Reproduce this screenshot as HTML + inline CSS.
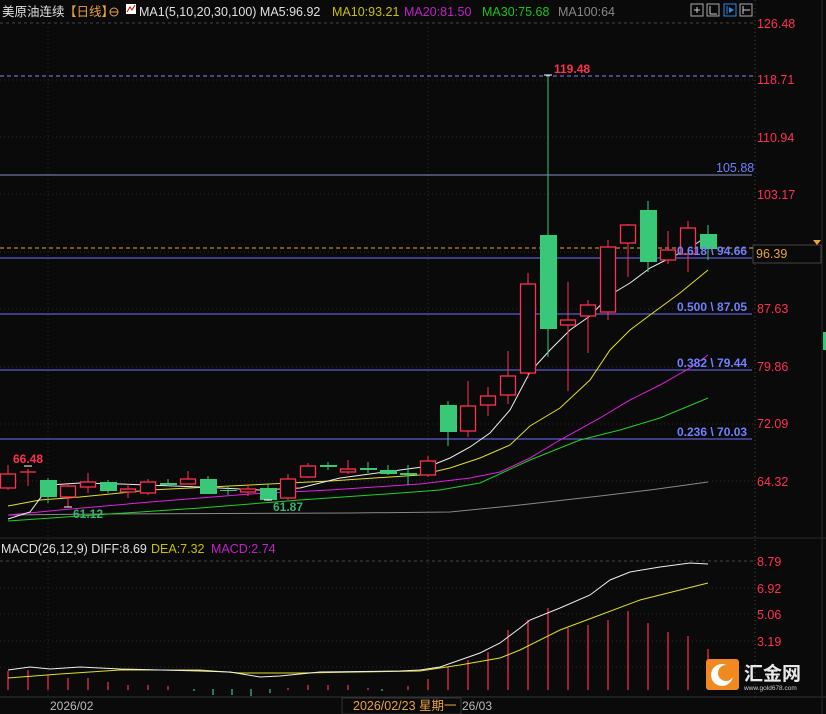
<!DOCTYPE html><html><head><meta charset="utf-8"><style>
html,body{margin:0;padding:0;background:#0a0a0a;}
svg{display:block}
text{font-family:"Liberation Sans","Noto Sans CJK SC",sans-serif;}
</style></head><body>
<svg width="826" height="714" viewBox="0 0 826 714" xmlns="http://www.w3.org/2000/svg">
<rect width="826" height="714" fill="#0a0a0a"/>
<g stroke="#2a2a2a" stroke-dasharray="1,3" stroke-width="1">
<line x1="0" y1="23" x2="755" y2="23" stroke="#444" stroke-dasharray="3,3"/>
<line x1="0" y1="80" x2="755" y2="80"/><line x1="0" y1="137" x2="755" y2="137"/>
<line x1="0" y1="194" x2="755" y2="194"/><line x1="0" y1="252" x2="755" y2="252"/>
<line x1="0" y1="309" x2="755" y2="309"/><line x1="0" y1="367" x2="755" y2="367"/>
<line x1="0" y1="424" x2="755" y2="424"/><line x1="0" y1="481" x2="755" y2="481"/>
<line x1="48" y1="23" x2="48" y2="697"/><line x1="428" y1="23" x2="428" y2="697"/>
<line x1="0" y1="561" x2="755" y2="561" stroke="#444" stroke-dasharray="3,3"/>
<line x1="0" y1="588" x2="755" y2="588"/><line x1="0" y1="614" x2="755" y2="614"/>
<line x1="0" y1="641" x2="755" y2="641"/><line x1="0" y1="667" x2="755" y2="667"/>
<line x1="755" y1="0" x2="755" y2="697" stroke="#444"/>
</g>
<line x1="0" y1="538" x2="826" y2="538" stroke="#2a2a2a"/>
<line x1="0" y1="697" x2="826" y2="697" stroke="#333"/>
<line x1="822" y1="0" x2="822" y2="714" stroke="#2a2a2a"/>
<rect x="823" y="332" width="3" height="18" fill="#38c878"/>
<text x="2" y="16" font-size="12.5" fill="#e0e0e0">美原油连续</text>
<text x="64" y="16" font-size="12.5" fill="#e8a33c">【日线】</text>
<circle cx="114" cy="12" r="4" fill="none" stroke="#e8a33c"/><line x1="110" y1="12" x2="118" y2="12" stroke="#e8a33c"/>
<rect x="126" y="4" width="10" height="10" fill="#fff"/><polyline points="127,12 130,7 132,10 135,5" fill="none" stroke="#d00" stroke-width="1"/>
<text x="139" y="16" font-size="12.5" fill="#e0e0e0">MA1(5,10,20,30,100) MA5:96.92</text>
<text x="332" y="16" font-size="12.5" fill="#c8c000">MA10:93.21</text>
<text x="404" y="16" font-size="12.5" fill="#c020c8">MA20:81.50</text>
<text x="482" y="16" font-size="12.5" fill="#20c020">MA30:75.68</text>
<text x="558" y="16" font-size="12.5" fill="#888">MA100:64</text>
<g fill="none" stroke="#aaa"><rect x="691" y="4" width="12" height="12"/><rect x="707" y="4" width="12" height="12"/><rect x="724" y="4" width="12" height="12" stroke="#2a8ae0"/><rect x="740" y="4" width="12" height="12"/></g>
<g stroke="#ccc"><line x1="694" y1="10" x2="700" y2="10"/><line x1="697" y1="7" x2="697" y2="13"/><line x1="710" y1="6" x2="710" y2="14"/><line x1="710" y1="14" x2="717" y2="14"/><line x1="743" y1="6" x2="743" y2="14"/><line x1="743" y1="10" x2="750" y2="10"/></g>
<line x1="727" y1="6" x2="727" y2="14" stroke="#2a8ae0"/><polygon points="729,7 734,10 729,13" fill="#2a8ae0"/>
<g font-size="12.5" fill="#ff3050">
<text x="757" y="28">126.48</text><text x="757" y="84">118.71</text><text x="757" y="142">110.94</text>
<text x="757" y="199">103.17</text><text x="757" y="313">87.63</text><text x="757" y="371">79.86</text>
<text x="757" y="428">72.09</text><text x="757" y="486">64.32</text>
<text x="757" y="566">8.79</text><text x="757" y="593">6.92</text><text x="757" y="619">5.06</text><text x="757" y="646">3.19</text>
</g>
<rect x="753" y="245" width="68" height="18" fill="#0a0a0a" stroke="#444"/>
<text x="756" y="258" font-size="12.5" fill="#e8a33c">96.39</text>
<polygon points="813,240 821,240 817,245" fill="#e8a33c"/>
<line x1="0" y1="76" x2="755" y2="76" stroke="#8080ff" stroke-dasharray="4,3"/>
<line x1="0" y1="175" x2="752" y2="175" stroke="#8890c8"/>
<text x="716" y="172" font-size="12.5" fill="#7080ff">105.88</text>
<line x1="0" y1="248" x2="755" y2="248" stroke="#e8a33c" stroke-dasharray="4,3"/>
<g stroke="#7070ff"><line x1="0" y1="258" x2="752" y2="258"/><line x1="0" y1="314" x2="752" y2="314"/><line x1="0" y1="370" x2="752" y2="370"/><line x1="0" y1="439" x2="752" y2="439"/></g>
<polyline fill="none" stroke="#888" points="8,515 100,514 350,513 450,512 520,505 600,496 650,490 708,482"/>
<polyline fill="none" stroke="#20d020" points="8,521 80,516 200,508 300,500 400,493 440,490 480,483 530,460 580,440 620,430 660,418 708,398"/>
<polyline fill="none" stroke="#e020e0" points="8,515 60,510 150,502 250,494 330,490 420,484 470,478 500,472 530,458 560,440 600,418 630,400 660,385 690,368 708,355"/>
<polyline fill="none" stroke="#e0e020" points="8,506 40,500 80,497 150,490 250,485 330,481 420,475 450,468 480,458 510,445 530,426 560,408 590,380 610,350 630,330 650,315 680,293 708,270"/>
<polyline fill="none" stroke="#eee" points="8,519 30,512 50,485 80,483 120,484 200,487 260,490 300,488 340,478 400,470 430,466 450,458 470,447 490,433 510,410 530,372 550,350 570,330 590,316 610,295 630,283 650,268 670,258 690,248 700,241 708,241"/>
<g stroke="#ff3050">
<line x1="8" y1="465" x2="8" y2="490"/><line x1="28" y1="469" x2="28" y2="486"/><line x1="68" y1="484" x2="68" y2="507"/><line x1="88" y1="473" x2="88" y2="493"/><line x1="128" y1="484" x2="128" y2="498"/><line x1="148" y1="479" x2="148" y2="495"/><line x1="188" y1="471" x2="188" y2="484"/><line x1="248" y1="485" x2="248" y2="496"/><line x1="288" y1="474" x2="288" y2="500"/><line x1="308" y1="463" x2="308" y2="478"/><line x1="348" y1="460" x2="348" y2="474"/><line x1="428" y1="456" x2="428" y2="477"/><line x1="468" y1="381" x2="468" y2="437"/><line x1="488" y1="387" x2="488" y2="416"/><line x1="508" y1="351" x2="508" y2="404"/><line x1="528" y1="273" x2="528" y2="378"/><line x1="568" y1="282" x2="568" y2="391"/><line x1="588" y1="300" x2="588" y2="353"/><line x1="608" y1="240" x2="608" y2="320"/><line x1="628" y1="224" x2="628" y2="277"/><line x1="668" y1="231" x2="668" y2="264"/><line x1="688" y1="221" x2="688" y2="272"/>
</g>
<g stroke="#38c878">
<line x1="48" y1="478" x2="48" y2="503"/><line x1="108" y1="480" x2="108" y2="493"/><line x1="168" y1="479" x2="168" y2="486"/><line x1="208" y1="476" x2="208" y2="494"/><line x1="228" y1="486" x2="228" y2="495"/><line x1="268" y1="484" x2="268" y2="501"/><line x1="328" y1="462" x2="328" y2="470"/><line x1="368" y1="462" x2="368" y2="473"/><line x1="388" y1="465" x2="388" y2="475"/><line x1="408" y1="465" x2="408" y2="485"/><line x1="448" y1="401" x2="448" y2="446"/><line x1="548" y1="75" x2="548" y2="357"/><line x1="648" y1="201" x2="648" y2="272"/><line x1="708" y1="225" x2="708" y2="260"/>
</g>
<g fill="#0a0a0a" stroke="#ff3050" stroke-width="1.3">
<rect x="0.5" y="474" width="15" height="14"/><line x1="20" y1="472" x2="36" y2="472"/><rect x="60.5" y="486" width="15" height="11"/><rect x="80.5" y="482" width="15" height="5"/><rect x="120.5" y="489" width="15" height="3"/><rect x="140.5" y="482" width="15" height="11"/><rect x="180.5" y="479" width="15" height="5"/><rect x="240.5" y="489" width="15" height="3"/><rect x="280.5" y="479" width="15" height="19"/><rect x="300.5" y="466" width="15" height="11"/><rect x="340.5" y="469" width="15" height="3"/><rect x="420.5" y="461" width="15" height="14"/><rect x="460.5" y="406" width="15" height="25"/><rect x="480.5" y="396" width="15" height="9"/><rect x="500.5" y="376" width="15" height="19"/><rect x="520.5" y="284" width="15" height="89"/><rect x="560.5" y="320" width="15" height="5"/><rect x="580.5" y="305" width="15" height="11"/><rect x="600.5" y="247" width="15" height="65"/><rect x="620.5" y="225" width="15" height="18"/><rect x="660.5" y="250" width="15" height="10"/><rect x="680.5" y="228" width="15" height="26"/>
</g>
<g fill="#38c878">
<rect x="40" y="480" width="17" height="17"/><rect x="100" y="482" width="17" height="9"/><rect x="160" y="483" width="17" height="2"/><rect x="200" y="479" width="17" height="15"/><rect x="220" y="490" width="17" height="1"/><rect x="260" y="488" width="17" height="12"/><rect x="320" y="465" width="17" height="2"/><rect x="360" y="468" width="17" height="2"/><rect x="380" y="470" width="17" height="4"/><rect x="400" y="473" width="17" height="2"/><rect x="440" y="405" width="17" height="27"/><rect x="540" y="235" width="17" height="94"/><rect x="640" y="210" width="17" height="52"/><rect x="700" y="234" width="17" height="15"/>
</g>
<g stroke="#fff"><line x1="544" y1="75" x2="552" y2="75"/><line x1="24" y1="466" x2="32" y2="466"/><line x1="64" y1="507" x2="72" y2="507"/><line x1="264" y1="500" x2="272" y2="500"/></g>
<text x="554" y="73" font-size="12" font-weight="bold" fill="#ff3050">119.48</text>
<text x="13" y="463" font-size="12" font-weight="bold" fill="#ff3050">66.48</text>
<text x="73" y="518" font-size="12" font-weight="bold" fill="#38b070">61.12</text>
<text x="273" y="511" font-size="12" font-weight="bold" fill="#38b070">61.87</text>
<g font-size="12" font-weight="bold" fill="#7080ff">
<text x="677" y="255">0.618 \ 94.66</text><text x="677" y="311">0.500 \ 87.05</text><text x="677" y="367">0.382 \ 79.44</text><text x="677" y="436">0.236 \ 70.03</text>
</g>
<text x="1" y="553" font-size="12.5" fill="#e0e0e0">MACD(26,12,9) DIFF:8.69</text>
<text x="151" y="553" font-size="12.5" fill="#c8c000">DEA:7.32</text>
<text x="211" y="553" font-size="12.5" fill="#c020c8">MACD:2.74</text>
<g stroke="#ff3050" stroke-width="1.2">
<line x1="8" y1="671" x2="8" y2="690"/><line x1="28" y1="670" x2="28" y2="690"/><line x1="48" y1="675" x2="48" y2="690"/><line x1="68" y1="678" x2="68" y2="690"/><line x1="88" y1="678" x2="88" y2="690"/><line x1="108" y1="682" x2="108" y2="690"/><line x1="128" y1="685" x2="128" y2="690"/><line x1="148" y1="685" x2="148" y2="690"/><line x1="168" y1="686" x2="168" y2="690"/><line x1="288" y1="688" x2="288" y2="690"/><line x1="308" y1="685" x2="308" y2="690"/><line x1="328" y1="685" x2="328" y2="690"/><line x1="348" y1="685" x2="348" y2="690"/><line x1="368" y1="688" x2="368" y2="690"/><line x1="408" y1="686" x2="408" y2="690"/><line x1="428" y1="679" x2="428" y2="690"/><line x1="448" y1="667" x2="448" y2="690"/><line x1="468" y1="660" x2="468" y2="690"/><line x1="488" y1="652" x2="488" y2="690"/><line x1="508" y1="630" x2="508" y2="690"/><line x1="528" y1="620" x2="528" y2="690"/><line x1="548" y1="608" x2="548" y2="690"/><line x1="568" y1="628" x2="568" y2="690"/><line x1="588" y1="625" x2="588" y2="690"/><line x1="608" y1="620" x2="608" y2="690"/><line x1="628" y1="611" x2="628" y2="690"/><line x1="648" y1="623" x2="648" y2="690"/><line x1="668" y1="632" x2="668" y2="690"/><line x1="688" y1="636" x2="688" y2="690"/><line x1="708" y1="649" x2="708" y2="690"/>
</g>
<g stroke="#38c878" stroke-width="1.2"><line x1="194" y1="689" x2="194" y2="691"/><line x1="213" y1="689" x2="213" y2="695"/><line x1="232" y1="689" x2="232" y2="695"/><line x1="251" y1="689" x2="251" y2="696"/><line x1="270" y1="689" x2="270" y2="693"/><line x1="382" y1="689" x2="382" y2="691"/></g>
<polyline fill="none" stroke="#e0e020" points="8,678 60,674 120,670 200,670 240,673 300,673 420,671 460,665 500,658 520,650 560,630 600,615 640,600 680,590 708,583"/>
<polyline fill="none" stroke="#eee" points="8,670 30,667 50,669 80,667 100,668 120,669 200,671 230,672 260,677 280,676 320,672 400,671 420,670 440,667 460,660 480,653 500,643 520,628 530,620 560,608 590,595 610,580 630,572 660,567 690,563 708,564"/>
<text x="50" y="710" font-size="12" fill="#bbb">2026/02</text>
<rect x="342" y="698" width="119" height="16" fill="#0a0a0a" stroke="#333"/>
<text x="353" y="710" font-size="12.5" fill="#e8a33c">2026/02/23 星期一</text>
<text x="462" y="710" font-size="12" fill="#bbb">26/03</text>
<rect x="706" y="659" width="33" height="31" rx="3" fill="#f08a20"/>
<circle cx="722" cy="675" r="11" fill="#fff"/><circle cx="726" cy="673" r="8" fill="#f08a20"/>
<text x="744" y="680" font-size="19" font-weight="bold" fill="#e8e8e8">汇金网</text>
<text x="744" y="690" font-size="6.5" fill="#ccc">www.gold678.com</text>
</svg>
</body></html>
